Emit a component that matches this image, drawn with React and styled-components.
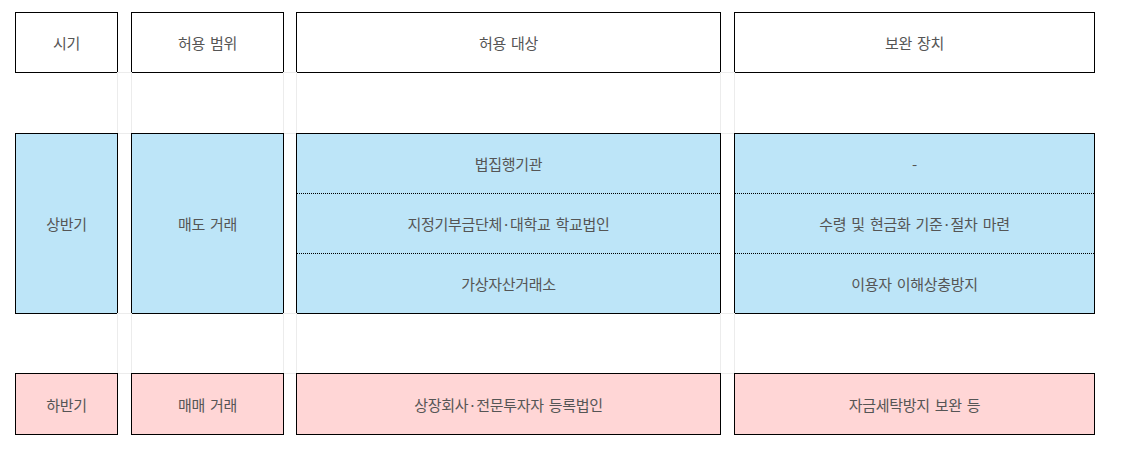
import React from "react";
import styled, { createGlobalStyle } from "styled-components";

const Global = createGlobalStyle`
  html, body { margin: 0; padding: 0; background: #fff; }
  body { font-family: "Noto Sans CJK KR", "Noto Sans", sans-serif; }
`;

const Page = styled.div`
  padding: 12px 0 0 15px;
`;

const Grid = styled.div`
  display: grid;
  grid-template-columns: 103px 13px 153px 12px 425px 13px 361px;
  grid-template-rows: 61px 60px 181px 59px 62px;
`;

const fills = { head: "#ffffff", blue: "#bde5f8", pink: "#ffd6d6" };

const Box = styled.div`
  box-sizing: border-box;
  border: 1px solid #000;
  background: ${(p) => fills[p.$tone]};
  display: flex;
  flex-direction: column;
  align-items: stretch;
  justify-content: center;
  min-width: 0;
`;

const Label = styled.div`
  flex: 1;
  display: flex;
  align-items: center;
  justify-content: center;
  color: #555;
  font-size: 15px;
  letter-spacing: -0.3px;
  word-spacing: 2px;
  white-space: nowrap;
  & + & {
    border-top: 1px dotted #000;
  }
`;

const Gap = styled.div``;

const Spacer = styled.div`
  box-sizing: border-box;
  border: 1px solid #ececec;
  margin: -1px -1px;
`;

const Empty = styled.div``;

function Row({ tone, cells }) {
  const out = [];
  cells.forEach((c, i) => {
    if (i > 0) out.push(<Gap key={"g" + i} />);
    const items = Array.isArray(c) ? c : [c];
    out.push(
      <Box key={"b" + i} $tone={tone}>
        {items.map((t, j) => (
          <Label key={j}>{t}</Label>
        ))}
      </Box>
    );
  });
  return out;
}

function SpacerRow({ id }) {
  const out = [];
  for (let i = 0; i < 7; i++) {
    out.push(i % 2 === 1 ? <Spacer key={id + i} /> : <Empty key={id + i} />);
  }
  return out;
}

export default function App() {
  return (
    <Page>
      <Global />
      <Grid>
        <Row tone="head" cells={["시기", "허용 범위", "허용 대상", "보완 장치"]} />
        <SpacerRow id="s1" />
        <Row
          tone="blue"
          cells={[
            "상반기",
            "매도 거래",
            ["법집행기관", "지정기부금단체·대학교 학교법인", "가상자산거래소"],
            ["-", "수령 및 현금화 기준·절차 마련", "이용자 이해상충방지"],
          ]}
        />
        <SpacerRow id="s2" />
        <Row
          tone="pink"
          cells={["하반기", "매매 거래", "상장회사·전문투자자 등록법인", "자금세탁방지 보완 등"]}
        />
      </Grid>
    </Page>
  );
}
